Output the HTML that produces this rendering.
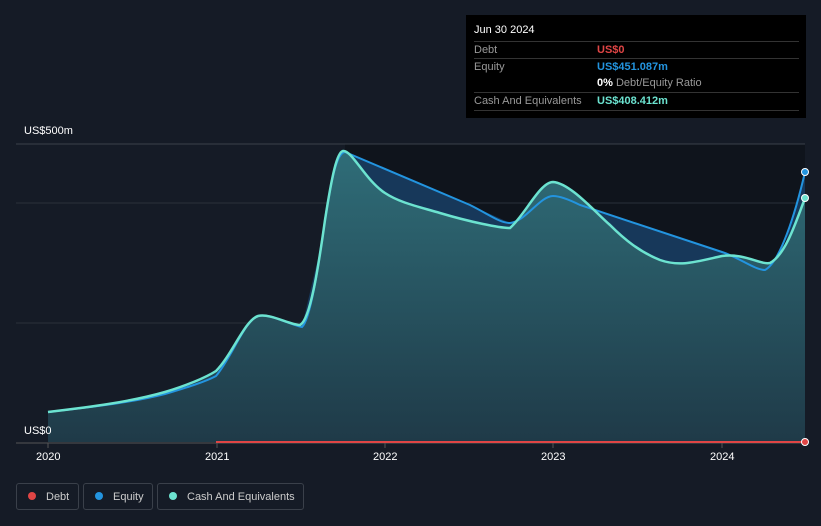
<html><head><style>
body{margin:0;background:#151b26;font-family:"Liberation Sans",sans-serif;width:821px;height:526px;overflow:hidden;position:relative}
.t{position:absolute;font-size:11px;color:#fff}
.tip{position:absolute;left:466px;top:15px;width:340px;height:103px;background:#000;font-size:11px}
.tip .r{position:absolute;left:8px;width:325px;border-top:1px solid #333;height:17px;line-height:17px;color:#999}
.leg{position:absolute;top:483px;height:27px;border:1px solid #3a404a;border-radius:3px;color:#ccc;font-size:11px;line-height:27px;box-sizing:border-box}
.leg i{display:inline-block;width:8px;height:8px;border-radius:50%;margin:0 10px 0 11px;vertical-align:-0px}
</style></head><body>
<svg width="821" height="526" style="position:absolute;left:0;top:0">
<defs><linearGradient id="g" x1="0" y1="0" x2="0" y2="1"><stop offset="0" stop-color="#2f6d78"/><stop offset="1" stop-color="#1f3a48"/></linearGradient></defs>
<rect x="345" y="144" width="460" height="298" fill="#0f141c"/>
<line x1="16" y1="144" x2="805" y2="144" stroke="#3a404a"/>
<line x1="16" y1="203" x2="805" y2="203" stroke="#2a303a"/>
<line x1="16" y1="323" x2="805" y2="323" stroke="#2a303a"/>
<path d="M48,412 L100,405 150,395 185,385 216,376 235,345 258,316 280,322 302,326 320,250 335,165 345,152 470,205 510,223 530,218 553,196 580,205 722,252 765,270 785,245 805,172 L805,442 48,442Z" fill="#17385a"/>
<path d="M48,412 C90,407 130,402 165,392 C185,386 205,378 216,371 C232,355 245,320 258,316 C270,313 290,325 300,325 C310,320 318,270 325,220 C332,175 337,152 343,151 C352,150 365,180 385,193 C400,203 420,207 440,213 C470,222 500,228 510,228 C525,215 540,182 553,182 C570,183 595,212 610,225 C625,240 640,252 660,260 C680,267 695,262 722,256 C745,253 760,265 770,263 C785,255 795,225 805,198 L805,442 48,442Z" fill="url(#g)"/>
<path d="M48,412 C90,407 130,403 165,394 C185,388 205,382 216,376 C232,357 245,320 258,316 C270,313 290,325 302,327 C310,320 318,270 325,220 C332,175 337,153 345,152 L470,205 C490,215 500,223 510,223 C525,222 540,196 553,196 C560,196 570,200 580,205 L722,252 C740,258 755,270 765,270 C780,262 795,215 805,172" fill="none" stroke="#2394df" stroke-width="2"/>
<path d="M48,412 C90,407 130,402 165,392 C185,386 205,378 216,371 C232,355 245,320 258,316 C270,313 290,325 300,325 C310,320 318,270 325,220 C332,175 337,152 343,151 C352,150 365,180 385,193 C400,203 420,207 440,213 C470,222 500,228 510,228 C525,215 540,182 553,182 C570,183 595,212 610,225 C625,240 640,252 660,260 C680,267 695,262 722,256 C745,253 760,265 770,263 C785,255 795,225 805,198" fill="none" stroke="#6ce3d0" stroke-width="2.5"/>
<line x1="16" y1="443" x2="805" y2="443" stroke="#555"/>
<g stroke="#555"><line x1="48" y1="443" x2="48" y2="448"/><line x1="217" y1="443" x2="217" y2="448"/><line x1="385" y1="443" x2="385" y2="448"/><line x1="553" y1="443" x2="553" y2="448"/><line x1="722" y1="443" x2="722" y2="448"/></g>
<line x1="216" y1="442" x2="805" y2="442" stroke="#e04545" stroke-width="2"/>
<circle cx="805" cy="442" r="3.5" fill="#e04545" stroke="#fff"/>
<circle cx="805" cy="172" r="3.5" fill="#2394df" stroke="#fff"/>
<circle cx="805" cy="198" r="3.5" fill="#6ce3d0" stroke="#fff"/>
</svg>
<div class="t" style="left:24px;top:125px">US$500m</div>
<div class="t" style="left:24px;top:425px">US$0</div>
<div class="t" style="left:36px;top:451px">2020</div>
<div class="t" style="left:205px;top:451px">2021</div>
<div class="t" style="left:373px;top:451px">2022</div>
<div class="t" style="left:541px;top:451px">2023</div>
<div class="t" style="left:710px;top:451px">2024</div>
<div class="tip">
<div style="position:absolute;left:8px;top:9px;color:#fff">Jun 30 2024</div>
<div class="r" style="top:26px">Debt<span style="position:absolute;left:123px;color:#e04545;font-weight:bold">US$0</span></div>
<div class="r" style="top:43px">Equity<span style="position:absolute;left:123px;color:#2394df;font-weight:bold">US$451.087m</span></div>
<div class="r" style="top:60px;border-top:none"><span style="position:absolute;left:123px"><b style="color:#fff">0%</b> Debt/Equity Ratio</span></div>
<div class="r" style="top:77px">Cash And Equivalents<span style="position:absolute;left:123px;color:#6ce3d0;font-weight:bold">US$408.412m</span></div>
<div class="r" style="top:95px;height:0"></div>
</div>
<div class="leg" style="left:16px;width:63px"><i style="background:#e04545"></i>Debt</div>
<div class="leg" style="left:83px;width:70px"><i style="background:#2394df"></i>Equity</div>
<div class="leg" style="left:157px;width:147px"><i style="background:#6ce3d0"></i>Cash And Equivalents</div>
</body></html>
